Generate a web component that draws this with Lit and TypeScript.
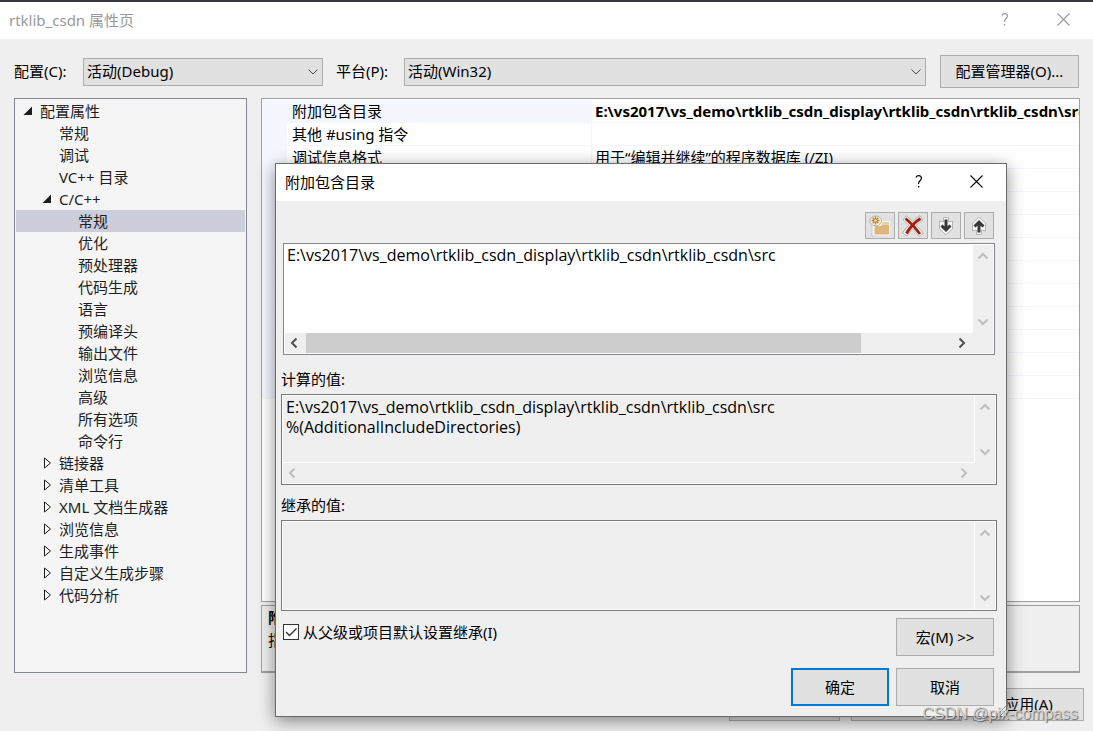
import { LitElement, html, svg, css, nothing } from "lit";
import { customElement, property, state } from "lit/decorators.js";
import { classMap } from "lit/directives/class-map.js";

const base = css`
  *, *::before, *::after { box-sizing: border-box; }
  :host {
    font-family: "Noto Sans", "Noto Sans CJK SC", sans-serif;
    font-size: 15px;
    line-height: 20px;
    color: #000;
  }
  button, textarea, select, input { font: inherit; color: inherit; margin: 0; }
  button {
    display: flex;
    align-items: center;
    justify-content: center;
    padding: 0 0 2px;
    background: #e1e1e1;
    border: 1px solid #adadad;
    white-space: nowrap;
  }
  svg { display: block; }
  .caption {
    display: flex;
    align-items: center;
    background: #fff;
    padding: 0 12px 0 9px;
  }
  .caption h1, .caption h2 { flex: 1; margin: 0; font-size: 15px; font-weight: 400; }
  .caption button { width: 36px; height: 36px; background: none; border: 0; }
`;

const cross = svg`<svg width="13" height="13" viewBox="0 0 13 13" fill="none" stroke="currentColor" stroke-width="1.1"><path d="M.5.5l12 12M12.5.5l-12 12"/></svg>`;
const help = svg`<svg width="8" height="13" viewBox="0 0 8 13" fill="none" stroke="currentColor" stroke-width="1.2"><path d="M1 2.6C1.4 1.3 2.4.7 3.8.7c1.600 0 2.700 1 2.700 2.400 0 2.600-2.900 2.700-2.900 5v.9"/><path d="M2.900 11.700h1.400" stroke-width="1.500"/></svg>`;

interface Node { label: string; depth: number; mark?: "open" | "closed"; }

const TREE: Node[] = [
  { label: "配置属性", depth: 0, mark: "open" },
  { label: "常规", depth: 1 },
  { label: "调试", depth: 1 },
  { label: "VC++ 目录", depth: 1 },
  { label: "C/C++", depth: 1, mark: "open" },
  { label: "常规", depth: 2 },
  { label: "优化", depth: 2 },
  { label: "预处理器", depth: 2 },
  { label: "代码生成", depth: 2 },
  { label: "语言", depth: 2 },
  { label: "预编译头", depth: 2 },
  { label: "输出文件", depth: 2 },
  { label: "浏览信息", depth: 2 },
  { label: "高级", depth: 2 },
  { label: "所有选项", depth: 2 },
  { label: "命令行", depth: 2 },
  { label: "链接器", depth: 1, mark: "closed" },
  { label: "清单工具", depth: 1, mark: "closed" },
  { label: "XML 文档生成器", depth: 1, mark: "closed" },
  { label: "浏览信息", depth: 1, mark: "closed" },
  { label: "生成事件", depth: 1, mark: "closed" },
  { label: "自定义生成步骤", depth: 1, mark: "closed" },
  { label: "代码分析", depth: 1, mark: "closed" },
];

@customElement("option-tree")
export class OptionTree extends LitElement {
  @state() private selected = 5;

  static styles = [base, css`
    :host { display: block; background: #f5f5f5; border: 1px solid #828790; padding: 1px; color: #1e1e1e; }
    ul { list-style: none; margin: 0; padding: 0; }
    li { display: flex; align-items: center; height: 22px; padding-left: 6px; white-space: nowrap; cursor: default; }
    .d1 { padding-left: 25px; }
    .d2 { padding-left: 44px; }
    .on { background: #cccedb; }
    .mark { width: 18px; flex: none; }
  `];

  private glyph(mark?: string) {
    if (mark === "open") return html`<svg width="12" height="12" viewBox="0 0 12 12"><path d="M10 1.500V10H1.500z" fill="#1e1e1e"/></svg>`;
    if (mark === "closed") return html`<svg width="12" height="12" viewBox="0 0 12 12"><path d="M3.500 1v10L9.500 6z" fill="#fff" stroke="#1e1e1e"/></svg>`;
    return nothing;
  }

  render() {
    return html`<ul role="tree">${TREE.map((n, i) => html`
      <li role="treeitem" aria-selected=${i === this.selected}
        class=${classMap({ ["d" + n.depth]: true, on: i === this.selected })}
        @click=${() => (this.selected = i)}><span class="mark">${this.glyph(n.mark)}</span>${n.label}</li>`)}</ul>`;
  }
}

const ROWS: [string, string][] = [
  ["附加包含目录", "E:\\vs2017\\vs_demo\\rtklib_csdn_display\\rtklib_csdn\\rtklib_csdn\\src"],
  ["其他 #using 指令", ""],
  ["调试信息格式", "用于“编辑并继续”的程序数据库 (/ZI)"],
  ...Array.from({ length: 10 }, (): [string, string] => ["", ""]),
];

@customElement("property-grid")
export class PropertyGrid extends LitElement {
  static styles = [base, css`
    :host { display: block; background: #fff; border: 1px solid #a0a0a0; padding-top: 1px; overflow: hidden; }
    table { width: 100%; table-layout: fixed; border-collapse: separate; border-spacing: 0; }
    td { height: 23px; padding: 0 5px; line-height: 22px; white-space: nowrap; overflow: hidden; border-bottom: 1px solid #f4f6fc; }
    .gutter { width: 25px; background: #f4f7fe; }
    .name { width: 305px; border-right: 1px solid #f4f6fc; }
    .value { padding: 0 0 0 3px; }
    .first .name { background: #f4f7fe; }
    .first .value { font-weight: 700; }
  `];

  render() {
    return html`<table>${ROWS.map(([name, value], i) => html`
      <tr class=${i === 0 ? "first" : ""}><td class="gutter"></td><td class="name">${name}</td><td class="value">${value}</td></tr>`)}</table>`;
  }
}

const CHEVRONS: Record<string, string> = {
  up: "M1.500 8.500L6 4l4.500 4.500",
  down: "M1.500 3.500L6 8l4.500-4.500",
  left: "M8.500 1.500L4 6l4.500 4.500",
  right: "M3.500 1.500L8 6l-4.500 4.500",
};

@customElement("scroll-box")
export class ScrollBox extends LitElement {
  @property() text = "";
  @property() label = "";
  @property({ type: Boolean }) editable = false;
  @property({ type: Boolean }) horizontal = false;

  static styles = [base, css`
    :host { display: grid; grid-template-columns: 1fr 20px; grid-template-rows: 1fr; background: #efefef; border: 1px solid #7a7a7a; box-shadow: inset 0 0 0 1px #fff; padding: 1px; }
    :host([horizontal]) { grid-template-rows: 1fr 20px; }
    textarea { display: block; width: 100%; height: 100%; min-height: 0; resize: none; border: 0; border-right: 1px solid #fff; border-radius: 0; outline: 0; padding: 1px 3px; background: none; font-family: "Open Sans", "Noto Sans CJK SC", sans-serif; font-size: 16px; overflow: hidden; white-space: pre; }
    :host([horizontal]) textarea { border-bottom: 1px solid #fff; }
    :host([editable]) { border-color: #828790; }
    :host([editable]) textarea { background: #fff; padding: 0 2px; }
    .bar { display: flex; justify-content: space-between; align-items: center; color: #bfbfbf; }
    .v { flex-direction: column; padding: 5px 0; }
    .h { padding: 0 5px 0 3px; }
    .bar button { width: 12px; height: 12px; border: 0; padding: 0; background: none; }
    .track { flex: 1; align-self: stretch; margin: 0 5px 0 6px; }
    .thumb { display: block; width: 86%; height: 100%; background: #cdcdcd; }
    :host([editable]) .h { color: #505050; }
  `];

  private arrow(dir: string, label: string) {
    return html`<button aria-label=${label}><svg width="12" height="12" viewBox="0 0 12 12" fill="none" stroke="currentColor" stroke-width="2"><path d=${CHEVRONS[dir]}/></svg></button>`;
  }

  render() {
    return html`
      <textarea aria-label=${this.label} ?readonly=${!this.editable} spellcheck="false" .value=${this.text}></textarea>
      <div class="bar v">${this.arrow("up", "向上")}${this.arrow("down", "向下")}</div>
      ${this.horizontal ? html`<div class="bar h">${this.arrow("left", "向左")}<span class="track">${this.editable ? html`<span class="thumb"></span>` : nothing}</span>${this.arrow("right", "向右")}</div>` : nothing}`;
  }
}

const PATH = "E:\\vs2017\\vs_demo\\rtklib_csdn_display\\rtklib_csdn\\rtklib_csdn\\src";

@customElement("include-dialog")
export class IncludeDialog extends LitElement {
  static styles = [base, css`
    :host { display: flex; flex-direction: column; background: #efefef; border: 1px solid #6b6b6b; box-shadow: 0 4px 16px rgba(0, 0, 0, .45); }
    .caption { height: 37px; flex: none; }
    .caption h2 { padding-bottom: 2px; }
    .caption button + button { margin-left: 21px; }
    .body { flex: 1; display: flex; flex-direction: column; padding: 11px 9px 10px 5px; }
    .tools { display: flex; justify-content: flex-end; gap: 3px; padding-right: 3px; margin-bottom: 4px; }
    .tools button { width: 30px; height: 27px; padding: 0; }
    .paths { height: 112px; margin: 0 2px; }
    h3 { margin: 14px 0 5px; font-size: 15px; font-weight: 400; line-height: 20px; }
    .result { height: 91px; }
    .result + h3 { margin-top: 10px; }
    .foot { display: flex; justify-content: space-between; align-items: flex-start; margin-top: 7px; padding: 0 3px 0 2px; }
    label { display: flex; align-items: center; gap: 4px; margin-top: 4px; }
    input { appearance: none; width: 16px; height: 16px; border: 1px solid #333; background: #fff; }
    .tick { display: grid; }
    .tick > * { grid-area: 1 / 1; }
    .tick svg { pointer-events: none; visibility: hidden; z-index: 1; }
    input:checked + svg { visibility: visible; }
    .foot button, .actions button { width: 98px; height: 38px; padding: 0; }
    .actions { display: flex; justify-content: flex-end; gap: 7px; padding-right: 3px; margin-top: 12px; }
    .actions .ok { border: 2px solid #0078d7; }
  `];

  private arrowIcon(d: string, halo: string) {
    return svg`<svg width="20" height="20" viewBox="0 0 20 20" fill="none"><path d=${halo} fill="#f6f6f6" stroke="#b4b4b4"/><path d=${d} stroke="#383838" stroke-width="3"/></svg>`;
  }

  render() {
    return html`
      <div class="caption"><h2>附加包含目录</h2><button aria-label="帮助">${help}</button><button aria-label="关闭">${cross}</button></div>
      <div class="body">
        <div class="tools">
          <button aria-label="新行"><svg width="22" height="22" viewBox="0 0 22 22">
            <path d="M3 6h3v15H3z" fill="#fafafa" stroke="#bbb" stroke-width=".8"/>
            <path d="M4.500 20.500V9.500h7L13 6h8v14.500z" fill="#faf6ee"/>
            <path d="M5.500 19.500V11h7V9.500H20v10z" fill="#dcb67a"/>
            <path d="M13.500 8H20" stroke="#dcb67a" stroke-width="1.200"/>
            <path d="M4 1.200h5L12.500 4v3.500L9 10.500H4L1 7.500V4z" fill="#f4f0e8" stroke="#aaa" stroke-width=".8"/>
            <path d="M6.500 1.500v8M2.500 5.500h8M3.700 2.700l5.600 5.600M9.300 2.700L3.700 8.300" stroke="#c27d1a" stroke-width="1.300"/>
            <circle cx="6.500" cy="5.500" r="1.300" fill="#f4e4c4"/></svg></button>
          <button aria-label="删除"><svg width="22" height="22" viewBox="0 0 22 22" fill="none">
            <path d="M2.500 2.500C9 8 14 13 19.500 20M19.500 2.500C12 8 7 13 2.500 19.500" stroke="#b0b0b0" stroke-width="6"/>
            <path d="M3 3C9 8 14 13 19 19.500M19 3C12 8 7 13 3 19" stroke="#f6f6f6" stroke-width="4.600"/>
            <path d="M3.500 3.500c5 4 9 8 14.500 15.500" stroke="#a31e0a" stroke-width="2.600"/><path d="M18.500 3.500C13 7 8 12 4.500 18.500" stroke="#a31e0a" stroke-width="3"/></svg></button>
          <button aria-label="下移">${this.arrowIcon("M10 3.500V14M5.500 9.500L10 14l4.500-4.500", "M7.500 1.500h5v4.500l4-1v8L10 18.800 3.500 13V5l4 1z")}</button>
          <button aria-label="上移">${this.arrowIcon("M10 16.500V6M5.500 10.500L10 6l4.500 4.500", "M7.500 18.500h5V14l4 1V7L10 1.200 3.500 7v8l4-1z")}</button>
        </div>
        <scroll-box class="paths" label="附加包含目录" editable horizontal .text=${PATH}></scroll-box>
        <h3>计算的值:</h3>
        <scroll-box class="result" label="计算的值" horizontal .text=${PATH + "\n%(AdditionalIncludeDirectories)"}></scroll-box>
        <h3>继承的值:</h3>
        <scroll-box class="result" label="继承的值"></scroll-box>
        <div class="foot">
          <label><span class="tick"><input type="checkbox" checked><svg width="16" height="16" viewBox="0 0 16 16" fill="none" stroke="#333" stroke-width="1.400"><path d="M3 8l3.500 3.500L13.500 4.500"/></svg></span>从父级或项目默认设置继承(I)</label>
          <button>宏(M) &gt;&gt;</button>
        </div>
        <div class="actions"><button class="ok">确定</button><button>取消</button></div>
      </div>`;
  }
}

@customElement("app-root")
export class AppRoot extends LitElement {
  static styles = [base, css`
    :host { display: flex; flex-direction: column; position: relative; min-height: 100vh; background: #efefef; border-top: 2px solid #3a383e; overflow: hidden; box-sizing: border-box; }
    .caption { height: 37px; flex: none; color: #999; padding-bottom: 1px; }
    .caption button { color: #999; }
    .caption button + button { margin-left: 22px; }
    .config { display: flex; align-items: center; padding: 16px 14px 10px; }
    .pick { display: flex; align-items: center; white-space: nowrap; }
    .pick label { flex: none; padding-bottom: 2px; }
    .first { width: 309px; margin-right: 13px; }
    .second { flex: 1; margin-right: 14px; }
    .first label { width: 69px; }
    .second label { width: 68px; }
    .combo { flex: 1; display: grid; align-items: center; }
    .combo > * { grid-area: 1 / 1; }
    select { appearance: none; width: 100%; height: 28px; padding: 0 3px 1px; background: #e1e1e1; border: 1px solid #adadad; border-radius: 0; }
    .combo svg { justify-self: end; margin-right: 5px; pointer-events: none; z-index: 1; }
    .manager { width: 139px; height: 33px; }
    .main { flex: 1; display: flex; gap: 14px; padding: 0 13px 0 14px; min-height: 0; }
    option-tree { width: 233px; flex: none; }
    .detail { flex: 1; min-width: 0; display: flex; flex-direction: column; gap: 3px; }
    property-grid { flex: 1; }
    .help { height: 68px; border: 1px solid #a0a0a0; border-bottom-width: 2px; padding: 0 6px; line-height: 23px; white-space: nowrap; overflow: hidden; }
    .help strong { display: block; }
    .commands { display: flex; justify-content: flex-end; gap: 11px; padding: 15px 9px 10px; }
    .commands button { width: 111px; height: 33px; }
    include-dialog { position: absolute; top: 161px; left: 275px; right: 86px; height: 554px; }
    .grip { position: absolute; right: 87px; bottom: 15px; }
    .stamp { position: absolute; right: 15px; bottom: 7px; font: 16px/20px "Liberation Sans", sans-serif; color: rgba(215, 215, 215, .9); text-shadow: 1px 1px 1px rgba(90, 90, 90, .9); white-space: nowrap; }
  `];

  private combo(id: string, label: string, value: string, cls: string) {
    return html`<div class="pick ${cls}"><label for=${id}>${label}</label>
      <span class="combo"><select id=${id}><option>${value}</option></select>
      <svg width="10" height="6" viewBox="0 0 10 6" fill="none" stroke="#444"><path d="M.5.5L5 5 9.500.5"/></svg></span></div>`;
  }

  render() {
    return html`
      <div class="caption"><h1>rtklib_csdn 属性页</h1><button aria-label="帮助">${help}</button><button aria-label="关闭">${cross}</button></div>
      <div class="config">
        ${this.combo("cfg", "配置(C):", "活动(Debug)", "first")}
        ${this.combo("plat", "平台(P):", "活动(Win32)", "second")}
        <button class="manager">配置管理器(O)...</button>
      </div>
      <div class="main">
        <option-tree></option-tree>
        <div class="detail">
          <property-grid></property-grid>
          <div class="help"><strong>附加包含目录</strong>指定一个或多个要添加到包含路径中的目录</div>
        </div>
      </div>
      <div class="commands"><button>确定</button><button>取消</button><button>应用(A)</button></div>
      <include-dialog role="dialog" aria-label="附加包含目录"></include-dialog>
      <svg class="grip" width="10" height="10" viewBox="0 0 10 10" stroke="#999" fill="none"><path d="M0 10L10 0M4 10l6-6M8 10l2-2"/></svg>
      <div class="stamp">CSDN @pix-compass</div>`;
  }
}
